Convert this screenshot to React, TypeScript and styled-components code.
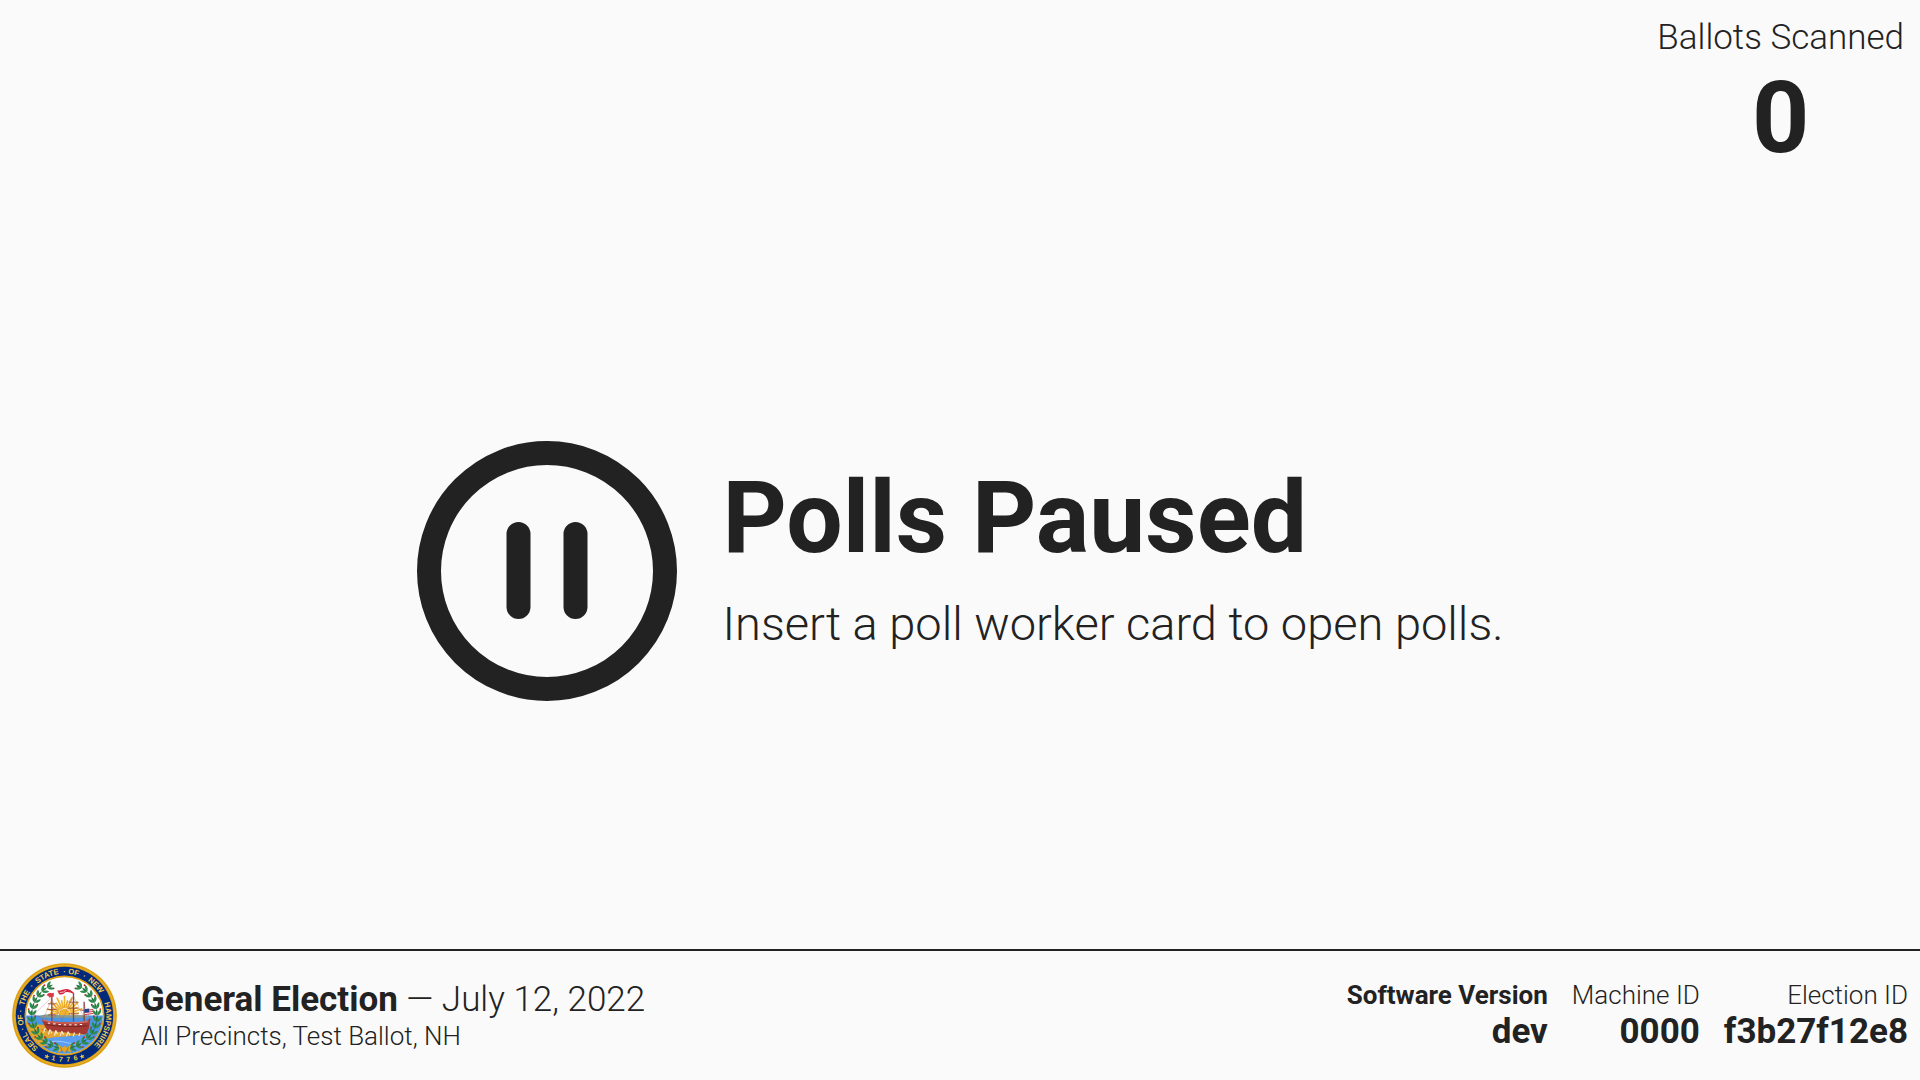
import React from "react";
import styled, { createGlobalStyle } from "styled-components";

const ink = "#222222";
const paper = "#fafafa";
const gold = "#dc9f12";
const navy = "#00297b";
const leafGreen = "#2f8a4c";
const berryRed = "#c8202f";

const GlobalStyle = createGlobalStyle`
  * {
    box-sizing: border-box;
  }
  body {
    margin: 0;
    background: ${paper};
    color: ${ink};
    font-family: Roboto, "Noto Sans", sans-serif;
    font-weight: 300;
  }
`;

const Screen = styled.div`
  display: flex;
  flex-direction: column;
  min-height: 100vh;
`;

const Header = styled.header`
  display: flex;
  justify-content: flex-end;
  padding: 16px;
`;

const BallotCount = styled.div`
  display: flex;
  flex-direction: column;
  align-items: center;
`;

const CountLabel = styled.span`
  font-size: 35px;
  line-height: 44px;
`;

const CountValue = styled.strong`
  font-size: 100px;
  font-weight: 700;
  line-height: 116px;
`;

const Main = styled.main`
  display: flex;
  flex: 1;
  align-items: center;
  justify-content: center;
  gap: 46px;
`;

const PauseSvg = styled.svg`
  flex: none;
  width: 260px;
  height: 260px;
`;

const Title = styled.h1`
  margin: 0 0 18px;
  font-size: 100px;
  font-weight: 700;
  line-height: 120px;
`;

const Instruction = styled.p`
  margin: 0 0 32px;
  font-size: 47px;
  line-height: 56px;
`;

const Footer = styled.footer`
  display: flex;
  align-items: center;
  gap: 24px;
  padding: 12px;
  border-top: 2px solid ${ink};
`;

const SealSvg = styled.svg`
  flex: none;
  width: 105px;
  height: 105px;
`;

const ElectionInfo = styled.div`
  flex: 1;
`;

const Line = styled.div<{ $large?: boolean; $bold?: boolean }>`
  font-size: ${(p) => (p.$large ? 35 : 26)}px;
  font-weight: ${(p) => (p.$bold ? 700 : 300)};
  line-height: ${(p) => (p.$large ? 41 : 32)}px;
`;

const Name = styled.strong`
  font-weight: 700;
`;

const Details = styled.div`
  display: flex;
  gap: 24px;
  text-align: right;
`;

const PauseIcon = () => (
  <PauseSvg viewBox="0 0 260 260" aria-hidden="true" fill="none" stroke={ink} strokeWidth={24} strokeLinecap="round">
    <circle cx="130" cy="130" r="118" />
    <path d="M101.5 93v73M158.5 93v73" />
  </PauseSvg>
);

const point = (angle: number, radius: number) => {
  const a = (angle * Math.PI) / 180;
  return [Math.sin(a) * radius, -Math.cos(a) * radius];
};

const ringWords = [
  { text: "SEAL", angle: -127 },
  { text: "·", angle: -108 },
  { text: "OF", angle: -96 },
  { text: "·", angle: -84 },
  { text: "THE", angle: -66 },
  { text: "·", angle: -48 },
  { text: "STATE", angle: -24 },
  { text: "·", angle: 0 },
  { text: "OF", angle: 12 },
  { text: "·", angle: 27 },
  { text: "NEW", angle: 46 },
  { text: "HAMPSHIRE", angle: 104 },
];

const Wreath = () => (
  <g>
    {[-1, 1].map((side) =>
      Array.from({ length: 13 }, (_, i) => {
        const angle = side * (166 - i * 11.6);
        const [x, y] = point(angle, 98);
        const [bx, by] = point(angle - side * 5, i % 2 ? 109 : 88);
        const tangent = side > 0 ? angle + 180 : angle;
        return (
          <g key={`${side}${i}`}>
            <g transform={`translate(${x} ${y}) rotate(${tangent})`} fill={leafGreen}>
              <path d="M-10 0Q0 -7 11 0Q0 5 -10 0Z" fill="#20713c" />
              <path d="M-9 0Q-6 -13 9 -13Q6 -2 -9 0Z" />
              <path d="M-9 0Q-6 13 9 13Q6 2 -9 0Z" />
            </g>
            <circle cx={bx} cy={by} r="2.6" fill={berryRed} />
          </g>
        );
      })
    )}
  </g>
);

const star = Array.from({ length: 10 }, (_, i) => point(i * 36, i % 2 ? 3.4 : 8.5).join(",")).join(" ");

const StateSeal = () => (
  <SealSvg viewBox="-157.5 -157.5 315 315" role="img" aria-label="Seal of the State of New Hampshire">
    <defs>
      <path id="ring-top" d="M0 125A125 125 0 0 1 0 -125A125 125 0 0 1 0 125" />
      <path id="ring-bottom" d="M-139 0A139 139 0 0 0 139 0" />
      <clipPath id="scene">
        <circle r="115" />
      </clipPath>
    </defs>
    <circle r="157" fill={gold} />
    <circle r="151" fill="none" stroke="#eab431" strokeWidth="3" />
    <circle r="146" fill={navy} />
    <circle r="120" fill={gold} />
    <circle r="115" fill="#ffffff" />
    <g clipPath="url(#scene)">
      <g stroke="#efb22b" strokeWidth="5" strokeLinecap="round">
        {Array.from({ length: 17 }, (_, i) => {
          const a = -96 + i * 12;
          const [x1, y1] = point(a, 21);
          const [x2, y2] = point(a, i % 2 ? 42 : 54);
          return <line key={i} x1={x1} y1={y1 - 3} x2={x2} y2={y2 - 3} />;
        })}
      </g>
      <circle cy="-3" r="17" fill="#efb22b" />
      <rect x="-120" y="0" width="240" height="120" fill="#4a95e8" />
      <path d="M-72 0Q-42 -8 -14 1L72 0V7H-72Z" fill="#8a9b90" />
      <path d="M-116 27Q-70 25 -35 32L52 43L66 56Q22 60 -12 67Q-35 76 -10 86L-70 92L-120 60Z" fill="#e2a42c" />
      <path d="M-70 42Q-38 52 -8 48L48 56" fill="none" stroke="#bd832a" strokeWidth="3" />
      <path d="M-66 72Q-20 60 24 64L76 55V104H-42Z" fill="#5b9df0" />
      <path d="M-54 82Q-25 72 10 82T60 80" fill="none" stroke="#9bc8ff" strokeWidth="3" />

      <g fill="none" stroke="#a5594c" strokeWidth="1.5">
        <path d="M-38 -54L-92 -3M-38 -50L-62 6M-38 -50L-8 14M27 -58L-35 11M27 -58L60 10M59 -32L80 16M-92 -3L-50 13M27 -58L-8 14" opacity=".6" />
        <path d="M-50 -35H-26M-52 -18H-24M13 -40H41M11 -22H43M48 -16H70M13 -5H42M-49 -2H-26" strokeWidth="3" />
      </g>
      <path d="M-38 -58V20M27 -68V18M59 -41V18" stroke="#87473f" strokeWidth="4" />
      <path d="M-69 9Q-63 17 -48 17L48 22Q64 22 78 7L75 28Q72 47 64 57L-50 45Q-62 32 -69 9Z" fill="#a63a32" />
      <path d="M-65 14Q-10 29 72 18" fill="none" stroke="#d9685a" strokeWidth="4" />
      <path d="M-56 27Q0 37 68 31" fill="none" stroke="#742824" strokeWidth="3" />
      <path d="M-50 23h7M-34 25h7M-18 27h7M-2 28h7M14 28h7M30 28h7M46 27h7" stroke="#fff" strokeWidth="3" />
      <path d="M-58 38l-5 14M-44 42l-4 15M-43 43l5 10M-26 45l-4 15M-26 45l5 11M-8 47l-5 14M-8 47l5 11M11 49l-5 13M11 49l5 10M30 51l-4 12M46 52l-3 10" stroke="#f8ebdd" strokeWidth="3.5" />
      <path d="M-38 -67Q-47 -71 -54 -61Q-47 -61 -45 -53Q-38 -58 -32 -56V-68Z" fill="#d93a48" />
      <path d="M27 -69Q12 -85 -6 -77Q-15 -73 -22 -76L-16 -64Q-4 -61 2 -70Q13 -73 27 -65Z" fill="#d5263c" />
      <path d="M-14 -69Q-2 -68 5 -76" stroke="#fff" strokeWidth="2" fill="none" />
      <rect x="59" y="-19" width="27" height="17" fill="#fff" transform="rotate(-8 59 -19)" />
      <path d="M60 -15L86 -18M60 -9L87 -12M61 -3L87 -6" stroke="#d23043" strokeWidth="3" />
      <path d="M59 -19L74 -21V-10L59 -8Z" fill="#24418d" />
    </g>
    <Wreath />
    <path d="M-20 88L-5 96L0 91L5 96L20 88L16 100L21 112L5 105L0 112L-6 105L-21 112L-15 100Z" fill="#e6a51c" />
    <path d="M-12 94L-7 108M12 94L7 108" stroke="#9d6b10" strokeWidth="2" />
    <g fill="#f0cb50" fontFamily='"Liberation Sans", sans-serif' fontWeight="700" fontSize="23">
      {ringWords.map(({ text, angle }) => (
        <text key={angle} textAnchor="middle">
          <textPath href="#ring-top" startOffset={`${((angle + 180) / 360) * 100}%`}>
            {text}
          </textPath>
        </text>
      ))}
      <text textAnchor="middle" fontSize="21">
        <textPath href="#ring-bottom" startOffset="50%">
          {"1\u00a0\u00a07\u00a0\u00a07\u00a0\u00a06"}
        </textPath>
      </text>
      <polygon points={star} transform="translate(-53 123) rotate(23)" />
      <polygon points={star} transform="translate(53 123) rotate(-23)" />
    </g>
  </SealSvg>
);

const App = () => (
  <>
    <GlobalStyle />
    <Screen>
      <Header>
        <BallotCount>
          <CountLabel>Ballots Scanned</CountLabel>
          <CountValue>0</CountValue>
        </BallotCount>
      </Header>
      <Main>
        <PauseIcon />
        <div>
          <Title>Polls Paused</Title>
          <Instruction>Insert a poll worker card to open polls.</Instruction>
        </div>
      </Main>
      <Footer>
        <StateSeal />
        <ElectionInfo>
          <Line $large>
            <Name>General Election</Name> — July 12, 2022
          </Line>
          <Line>All Precincts, Test Ballot, NH</Line>
        </ElectionInfo>
        <Details>
          <div>
            <Line $bold>Software Version</Line>
            <Line $large $bold>dev</Line>
          </div>
          <div>
            <Line>Machine ID</Line>
            <Line $large $bold>0000</Line>
          </div>
          <div>
            <Line>Election ID</Line>
            <Line $large $bold>f3b27f12e8</Line>
          </div>
        </Details>
      </Footer>
    </Screen>
  </>
);

export default App;
